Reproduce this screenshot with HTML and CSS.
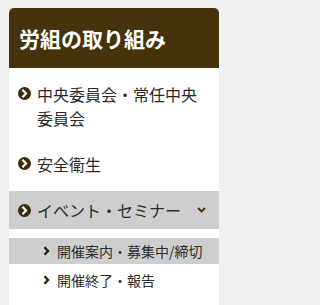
FILE: index.html
```html
<!DOCTYPE html>
<html lang="ja">
<head>
<meta charset="utf-8">
<link rel="stylesheet" href="styles.css">
</head>
<body>
<div class="card">
  <div class="card-head"><h2 class="card-title">労組の取り組み</h2></div>
  <ul class="menu">
    <li class="menu-item">
      <svg class="ci" viewBox="0 0 13 13"><circle cx="6.5" cy="6.5" r="6.5" fill="#3c2b07"/><polyline points="5.2,3.6 8,6.5 5.2,9.4" fill="none" stroke="#fff" stroke-width="2.2" stroke-linecap="square"/></svg>
      <span class="label">中央委員会・常任中央委員会</span>
    </li>
    <li class="menu-item">
      <svg class="ci" viewBox="0 0 13 13"><circle cx="6.5" cy="6.5" r="6.5" fill="#3c2b07"/><polyline points="5.2,3.6 8,6.5 5.2,9.4" fill="none" stroke="#fff" stroke-width="2.2" stroke-linecap="square"/></svg>
      <span class="label">安全衛生</span>
    </li>
    <li class="menu-item active">
      <svg class="ci" viewBox="0 0 13 13"><circle cx="6.5" cy="6.5" r="6.5" fill="#3c2b07"/><polyline points="5.2,3.6 8,6.5 5.2,9.4" fill="none" stroke="#fff" stroke-width="2.2" stroke-linecap="square"/></svg>
      <span class="label">イベント・セミナー</span>
      <svg class="caret" viewBox="0 0 9 6"><polyline points="1,1 4.5,4.5 8,1" fill="none" stroke="#3c2b07" stroke-width="1.8"/></svg>
    </li>
  </ul>
  <ul class="submenu">
    <li class="sub-item current">
      <svg class="chev" viewBox="0 0 7 10"><polyline points="1.5,1.2 5,5 1.5,8.8" fill="none" stroke="#2e2106" stroke-width="2.4"/></svg>
      <span>開催案内・募集中/締切</span>
    </li>
    <li class="sub-item">
      <svg class="chev" viewBox="0 0 7 10"><polyline points="1.5,1.2 5,5 1.5,8.8" fill="none" stroke="#2e2106" stroke-width="2.4"/></svg>
      <span>開催終了・報告</span>
    </li>
  </ul>
</div>
</body>
</html>
```
FILE: styles.css
```css
html, body {
  margin: 0;
  padding: 0;
  background: #f0f0f0;
}
body {
  padding: 8px 0 0 9px;
  font-family: "Noto Sans CJK JP", "Noto Sans", sans-serif;
  color: #2b2b2b;
}
.card {
  width: 210px;
  background: #fff;
  border-radius: 5px 5px 0 0;
  overflow: hidden;
  min-height: 297px;
}
.card-head {
  background: #45330b;
  height: 60px;
  display: flex;
  align-items: center;
  padding-left: 10px;
}
.card-title {
  margin: 0;
  color: #fff;
  font-size: 21px;
  font-weight: 700;
  line-height: 1;
}
.menu {
  list-style: none;
  margin: 0;
  padding: 7px 0 0 0;
}
.menu-item {
  display: flex;
  align-items: flex-start;
  padding: 7px 13px 7px 9px;
  margin-bottom: 8px;
  font-size: 16px;
  line-height: 24px;
}
.menu-item:last-child { margin-bottom: 0; }
.menu-item.active {
  background: #cecece;
  align-items: center;
}
.ci {
  width: 13px;
  height: 13px;
  flex: none;
  margin: 5px 6px 0 0;
}
.menu-item.active .ci { margin-top: 0; }
.label { flex: 1; }
.caret {
  width: 9px;
  height: 6px;
  flex: none;
}
.submenu {
  list-style: none;
  margin: 9px 0 0 0;
  padding: 0;
}
.sub-item {
  display: flex;
  align-items: center;
  padding: 3px 8px 3px 34px;
  margin-bottom: 3px;
  font-size: 14px;
  line-height: 20px;
}
.sub-item.current { background: #cecece; }
.chev {
  width: 7px;
  height: 10px;
  flex: none;
  margin-right: 7px;
}
```
